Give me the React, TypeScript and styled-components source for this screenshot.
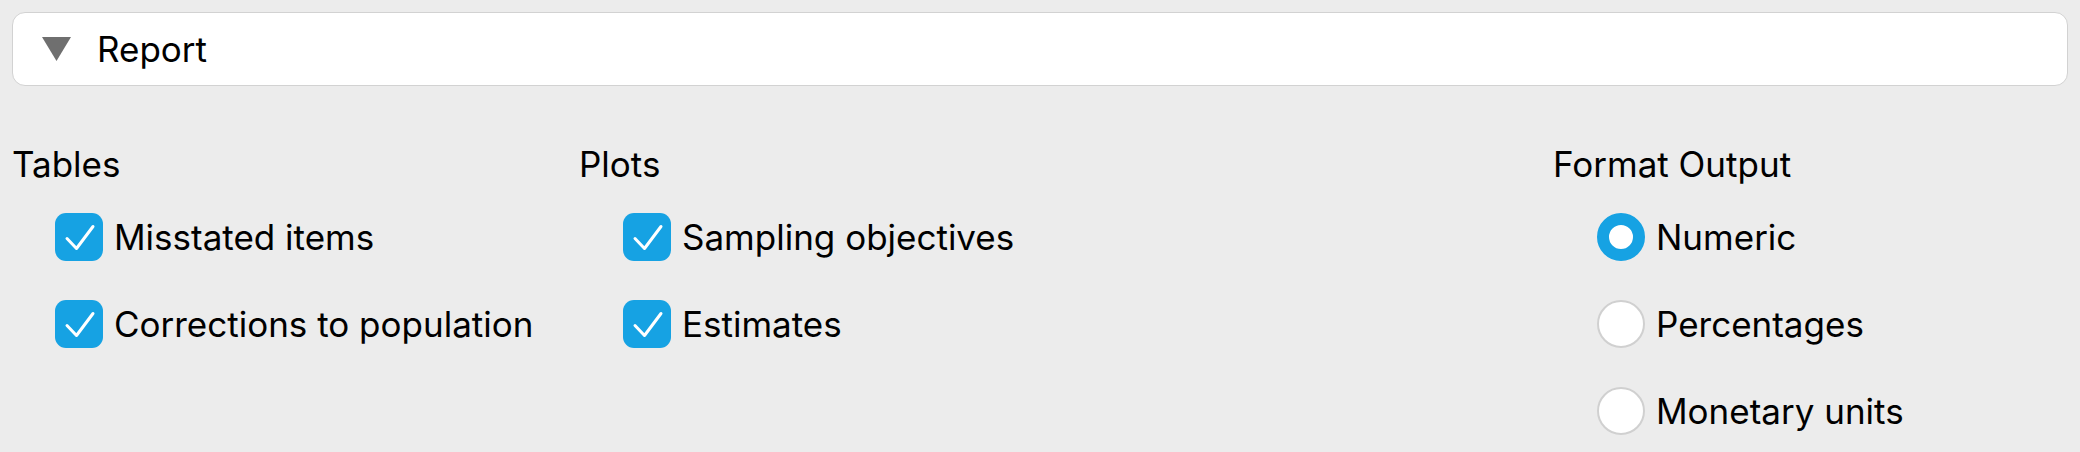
import React from "react";
import styled, { createGlobalStyle } from "styled-components";

const Global = createGlobalStyle`
  html, body { margin: 0; padding: 0; background: #ececec; }
  body { font-family: Inter, "Noto Sans", sans-serif; color: #000; }
`;

const Page = styled.div`
  padding: 12px 12px 0 12px;
  width: 2080px;
  height: 452px;
  box-sizing: border-box;
  overflow: hidden;
`;

const Header = styled.div`
  height: 74px;
  box-sizing: border-box;
  background: #fff;
  border: 1.5px solid #d2d2d2;
  border-radius: 13px;
  display: flex;
  align-items: center;
  padding-left: 29px;
  gap: 26px;
`;

const Arrow = styled.svg`
  width: 29px;
  height: 24px;
  flex: none;
`;

const HeaderTitle = styled.span`
  font-size: 35px;
  line-height: 1;
`;

const Columns = styled.div`
  display: grid;
  grid-template-columns: 567px 974px 1fr;
  margin-top: 58px;
`;

const Column = styled.div`
  display: flex;
  flex-direction: column;
`;

const Title = styled.div`
  font-size: 35px;
  line-height: 40px;
  height: 40px;
`;

const Items = styled.div<{ $indent: number }>`
  display: flex;
  flex-direction: column;
  gap: 39px;
  padding-left: ${(p) => p.$indent}px;
  margin-top: 29px;
`;

const Row = styled.label`
  display: flex;
  align-items: center;
  gap: 11px;
  height: 48px;
  font-size: 35px;
`;

const CheckBox = styled.span`
  width: 48px;
  height: 48px;
  border-radius: 11px;
  background: #16a2e3;
  display: flex;
  flex: none;
`;

const Radio = styled.span<{ $on?: boolean }>`
  width: 48px;
  height: 48px;
  box-sizing: border-box;
  border-radius: 50%;
  flex: none;
  background: #fff;
  border: ${(p) => (p.$on ? "12px solid #16a2e3" : "2px solid #d0d0d0")};
`;

const Check = () => (
  <svg width="48" height="48" viewBox="0 0 48 48">
    <path d="M12 25.5 L21.5 35.5 L38 13.5" fill="none" stroke="#fff" strokeWidth="3" strokeLinecap="round" strokeLinejoin="round" />
  </svg>
);

const CheckItem = ({ label }: { label: string }) => (
  <Row>
    <CheckBox>
      <Check />
    </CheckBox>
    {label}
  </Row>
);

const RadioItem = ({ label, on }: { label: string; on?: boolean }) => (
  <Row>
    <Radio $on={on} />
    {label}
  </Row>
);

export default function App() {
  return (
    <>
      <Global />
      <Page>
        <Header>
          <Arrow viewBox="0 0 29 24">
            <polygon points="0,0 29,0 14.5,24" fill="#6f6f6f" />
          </Arrow>
          <HeaderTitle>Report</HeaderTitle>
        </Header>
        <Columns>
          <Column>
            <Title>Tables</Title>
            <Items $indent={43}>
              <CheckItem label="Misstated items" />
              <CheckItem label="Corrections to population" />
            </Items>
          </Column>
          <Column>
            <Title>Plots</Title>
            <Items $indent={44}>
              <CheckItem label="Sampling objectives" />
              <CheckItem label="Estimates" />
            </Items>
          </Column>
          <Column>
            <Title>Format Output</Title>
            <Items $indent={44}>
              <RadioItem label="Numeric" on />
              <RadioItem label="Percentages" />
              <RadioItem label="Monetary units" />
            </Items>
          </Column>
        </Columns>
      </Page>
    </>
  );
}
